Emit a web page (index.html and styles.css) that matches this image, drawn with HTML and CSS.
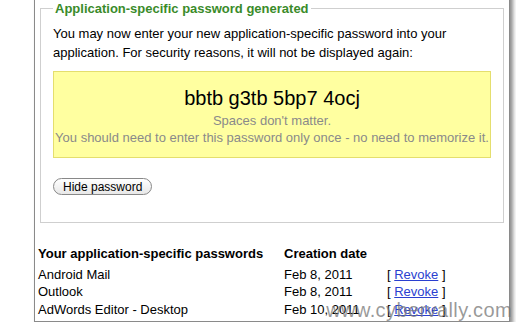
FILE: index.html
```html
<!DOCTYPE html>
<html>
<head>
<meta charset="utf-8">
<link rel="stylesheet" href="styles.css">
</head>
<body>
<div class="card">
  <fieldset class="generated">
    <legend class="gen-title">Application-specific password generated</legend>
    <p class="intro">You may now enter your new application-specific password into your application. For security reasons, it will not be displayed again:</p>
    <div class="pwbox">
      <div class="pw">bbtb g3tb 5bp7 4ocj</div>
      <div class="note">Spaces don't matter.</div>
      <div class="note">You should need to enter this password only once - no need to memorize it.</div>
    </div>
    <button class="hide-btn">Hide password</button>
  </fieldset>
  <div class="list">
    <div class="th">Your application-specific passwords</div>
    <div class="th">Creation date</div>
    <div></div>
    <div>Android Mail</div><div>Feb 8, 2011</div><div>[ <a href="#">Revoke</a> ]</div>
    <div>Outlook</div><div>Feb 8, 2011</div><div>[ <a href="#">Revoke</a> ]</div>
    <div>AdWords Editor - Desktop</div><div>Feb 10, 2011</div><div>[ <a href="#">Revoke</a> ]</div>
  </div>
  <div class="watermark">www.cybervally.com</div>
</div>
</body>
</html>
```
FILE: styles.css
```css
html, body {
  margin: 0;
  padding: 0;
  background: #fff;
}
body {
  font-family: "Liberation Sans", Arial, sans-serif;
  font-size: 13px;
  color: #000;
  overflow: hidden;
}
.card {
  position: relative;
  box-sizing: border-box;
  width: 476px;
  height: 333px;
  margin: -11px 0 0 34px;
  border: 1px solid #8a8a8a;
  box-shadow: 3px 3px 4px rgba(0,0,0,0.45);
  padding: 11px 5px 0 5px;
  background: #fff;
}
.generated {
  margin: 0;
  border: 1px solid #cfcfcf;
  padding: 0 12px 26px 12px;
  height: 222px;
  box-sizing: border-box;
}
.gen-title {
  color: #3a8b2a;
  font-weight: bold;
  font-size: 13px;
  padding: 0 2px;
  margin-left: 0;
}
.intro {
  margin: 8px 0 0 0;
  line-height: 19px;
}
.pwbox {
  margin-top: 9px;
  background: #ffffa0;
  border: 1px solid #e4de6e;
  text-align: center;
  padding: 14px 0 11px 0;
}
.pw {
  font-size: 20px;
  line-height: 24px;
  margin-bottom: 2px;
}
.note {
  color: #8a8a8a;
  font-size: 13px;
  line-height: 17px;
}
.hide-btn {
  margin-top: 20px;
  font-family: "Liberation Sans", Arial, sans-serif;
  font-size: 12px;
  height: 17px;
  padding: 0 9px;
  border: 1px solid #888;
  border-radius: 9px;
  background: linear-gradient(#ffffff, #e8e8e8);
  color: #000;
}
.list {
  display: grid;
  grid-template-columns: 246px 103px auto;
  margin: 22px 0 0 -2px;
  row-gap: 0;
  line-height: 17.5px;
}
.th {
  font-weight: bold;
  margin-bottom: 3px;
}
.list a {
  color: #2a3fd0;
  text-decoration: underline;
}
.watermark {
  position: absolute;
  right: -3px;
  bottom: -1px;
  font-size: 20px;
  color: rgba(120,120,120,0.75);
  letter-spacing: 0.4px;
}
```
